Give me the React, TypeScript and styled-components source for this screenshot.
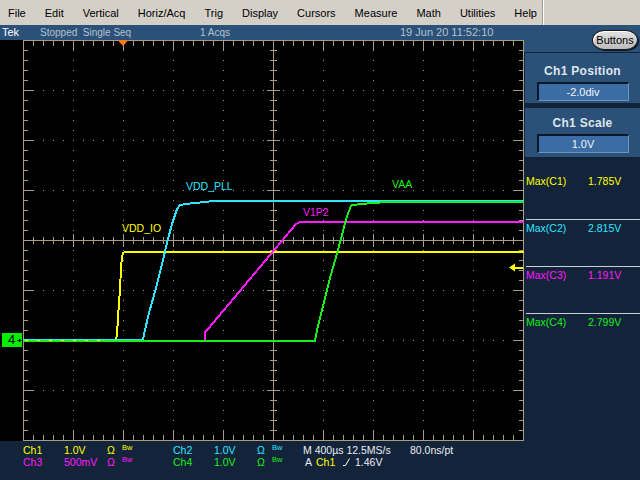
import React from 'react';
import styled, { createGlobalStyle } from 'styled-components';

const GlobalStyle = createGlobalStyle`
  html, body { margin: 0; padding: 0; background: #000; }
  body { width: 640px; height: 480px; overflow: hidden; }
`;

const TEK = `"Liberation Sans", Arial, sans-serif`;
const UI = `"Liberation Sans", Arial, sans-serif`;

const COL = {
  yellow: '#ffff00',
  cyan: '#2ee6ff',
  magenta: '#ff1aff',
  green: '#18f018',
  white: '#e8eef4',
  grid: '#a89e84',
};

const Frame = styled.div`
  width: 640px;
  height: 480px;
  display: grid;
  grid-template-rows: 25px 416px 39px;
  background: #13233a;
  overflow: hidden;
`;

/* ---------- menu ---------- */
const MenuBar = styled.div`
  display: flex;
  background: #d4d0c8;
  font-family: ${UI};
  font-size: 11px;
  color: #000;
`;
const MenuItems = styled.nav`
  width: 543px;
  box-sizing: border-box;
  display: flex;
  align-items: center;
  gap: 19px;
  padding-left: 8px;
  border-right: 1px solid #a09c94;
`;
const MenuFill = styled.div`
  flex: 1;
  border-left: 1px solid #ffffff;
`;
const MenuItem = styled.span`
  line-height: 24px;
`;

/* ---------- body ---------- */
const Body = styled.div`
  display: flex;
`;
const ScopeCol = styled.div`
  width: 524px;
  display: flex;
  flex-direction: column;
`;
const StatusBar = styled.div`
  height: 15px;
  background: #2b5179;
  display: grid;
  grid-template-columns: 38px 160px 200px auto;
  align-items: center;
  padding-left: 2px;
  font-family: ${TEK};
  font-size: 10px;
  line-height: 15px;
  color: #b6c2cf;
  white-space: pre;
`;
const StatusDate = styled.span`
  font-size: 11px;
`;
const TekLogo = styled.span`
  color: #ffffff;
  font-family: ${UI};
  font-size: 11px;
`;
const Screen = styled.div`
  position: relative;
  height: 401px;
  background: #000;
`;
const ChannelMarker = styled.div<{ $c: string }>`
  position: absolute;
  left: 2px;
  top: 293px;
  width: 20px;
  height: 14px;
  background: ${(p) => p.$c};
  display: flex;
  align-items: center;
  padding-left: 6px;
  box-sizing: border-box;
  gap: 2px;
  font-family: ${UI};
  font-size: 13px;
  line-height: 14px;
  color: #000;
`;

const SideCol = styled.div`
  width: 116px;
  display: flex;
  flex-direction: column;
  background: #13233a;
`;
const SideStatus = styled.div`
  height: 27px;
  background: #2b5179;
  display: flex;
  justify-content: flex-end;
  align-items: flex-start;
  padding: 5px 2px 0 0;
  box-sizing: border-box;
`;
const PillButton = styled.div`
  width: 46px;
  height: 20px;
  box-sizing: border-box;
  border-radius: 12px / 10px;
  background: linear-gradient(#e2e2e2, #bcbcbc);
  border: 1px solid #1a1a1a;
  box-shadow: inset 1px 1px 0 #ffffff, 1px 1px 0 #0c1828;
  display: flex;
  align-items: center;
  justify-content: center;
  font-family: ${UI};
  font-size: 11px;
  color: #000;
`;
const ControlGroup = styled.div<{ $top: number; $pad: number; $h: number }>`
  margin: ${(p) => p.$top}px 0 0 1px;
  height: ${(p) => p.$h}px;
  background: #2b5179;
  display: flex;
  flex-direction: column;
  align-items: center;
  padding-top: ${(p) => p.$pad}px;
  box-sizing: border-box;
`;
const ControlTitle = styled.div`
  font-family: ${UI};
  font-weight: bold;
  font-size: 12px;
  line-height: 14px;
  color: #dfe5ec;
  letter-spacing: 0.3px;
`;
const ControlValue = styled.div`
  margin-top: 4px;
  width: 92px;
  height: 19px;
  box-sizing: border-box;
  background: #3b6da4;
  border-top: 2px solid #0b182a;
  border-left: 2px solid #0b182a;
  border-bottom: 1px solid #6f95bd;
  border-right: 1px solid #6f95bd;
  display: flex;
  align-items: center;
  justify-content: center;
  font-family: ${TEK};
  font-size: 11px;
  color: #f0f4f8;
`;
const MeasPanel = styled.div`
  flex: 1;
  padding-top: 15px;
  margin-left: 2px;
`;
const MeasRow = styled.div<{ $line: boolean }>`
  height: 47px;
  box-sizing: border-box;
  border-top: 1px solid ${(p) => (p.$line ? '#c8d0da' : 'transparent')};
  padding-top: 2px;
  display: grid;
  grid-template-columns: 62px auto;
  align-items: start;
  font-family: ${TEK};
  font-size: 10.5px;
  line-height: 13px;
`;
const Colored = styled.span<{ $c: string }>`
  color: ${(p) => p.$c};
`;

/* ---------- bottom readout ---------- */
const Readout = styled.div`
  display: grid;
  grid-template-columns: 41px 43px 15px 51px 41px 43px 15px 31px auto;
  grid-auto-rows: 12px;
  padding: 3px 0 0 23px;
  font-family: ${TEK};
  font-size: 10.5px;
  line-height: 12px;
  white-space: pre;
`;
const Bw = styled.span<{ $c: string }>`
  color: ${(p) => p.$c};
  font-family: ${UI};
  font-size: 7.5px;
  line-height: 8px;
  align-self: start;
`;
const TimeInfo = styled.span`
  display: grid;
  grid-template-columns: 107px auto;
  color: ${COL.white};
`;
const TrigInfo = styled.span`
  display: grid;
  grid-template-columns: 11px 27px 12px auto;
  align-items: center;
  padding-left: 2px;
  color: ${COL.white};
`;

const TraceLabel = styled.text<{ $c: string }>`
  fill: ${(p) => p.$c};
  font-family: ${TEK};
  font-size: 10.5px;
`;

/* ---------- graticule ---------- */
const L = 23, T = 40, R = 523, B = 440, CX = 273, CY = 240;

function buildTicks(): string {
  let d = '';
  d += `M${L + 0.5} ${T}V${B + 1}M${R + 0.5} ${T}V${B + 1}M${L} ${T + 0.5}H${R + 1}M${L} ${B + 0.5}H${R + 1}`;
  d += `M${CX + 0.5} ${T}V${B + 1}M${L} ${CY + 0.5}H${R + 1}`;
  for (let y = T + 10; y < B; y += 10) {
    const major = (y - T) % 50 === 0;
    const len = major ? 10 : 4;
    d += `M${L} ${y + 0.5}h${len + 1}`;
    d += `M${R + 1} ${y + 0.5}h${-(len + 1)}`;
    const h = major ? 6 : 3;
    d += `M${CX - h} ${y + 0.5}h${2 * h + 1}`;
  }
  for (let x = L + 10; x < R; x += 10) {
    const major = (x - L) % 50 === 0;
    const len = major ? 9 : 5;
    d += `M${x + 0.5} ${T}v${len + 1}`;
    d += `M${x + 0.5} ${B + 1}v${-(len + 1)}`;
    const h = major ? 6 : 3;
    d += `M${x + 0.5} ${CY - h}v${2 * h + 1}`;
  }
  return d;
}

function buildDots(): string {
  let d = '';
  for (let gx = L + 50; gx < R; gx += 50) {
    if (gx === CX) continue;
    for (let y = T + 10; y < B; y += 10) d += `M${gx} ${y}h1v1h-1z`;
  }
  for (let gy = T + 50; gy < B; gy += 50) {
    if (gy === CY) continue;
    for (let x = L + 10; x < R; x += 10) d += `M${x} ${gy}h1v1h-1z`;
  }
  return d;
}

const TICKS = buildTicks();
const DOTS = buildDots();

const TRACES = {
  yellow: '23,341 116,341 117,334 118,318 119,302 120,290 121,268 122,257 123,253 125,252 524,252',
  magenta: '205,341 205,332 208,329 296,224 300,222 524,222',
  cyan: '23,340 143,340 144,334 149,313 156,288 162,264 167,243 172,224 177,209 180,205 190,203.5 200,202.5 213,201 524,201',
  green: '23,341 315,341 317,330 330,278 338,250 347,216 351,206 352,205 367,203.5 380,202.5 420,202 524,202',
};

function ScopeDisplay() {
  return (
    <svg width={524} height={401} viewBox="0 40 524 401" style={{ display: 'block' }}>
      <path d={DOTS} fill={COL.grid} shapeRendering="crispEdges" />
      <path d={TICKS} stroke={COL.grid} strokeWidth={1} fill="none" shapeRendering="crispEdges" />
      <polygon points="117.5,40 128.5,40 123,46" fill="#ff7a1e" />
      <polyline points={TRACES.yellow} fill="none" stroke={COL.yellow} strokeWidth={2} shapeRendering="crispEdges" />
      <polyline points={TRACES.magenta} fill="none" stroke={COL.magenta} strokeWidth={2} shapeRendering="crispEdges" />
      <polyline points={TRACES.cyan} fill="none" stroke={COL.cyan} strokeWidth={2} shapeRendering="crispEdges" />
      <polyline points={TRACES.green} fill="none" stroke={COL.green} strokeWidth={2} shapeRendering="crispEdges" />
      <line x1={25} y1={340.5} x2={105} y2={340.5} stroke={COL.yellow} strokeWidth={1} strokeDasharray="3 9" shapeRendering="crispEdges" />
      <polygon points="509,267.5 515,263.5 515,271.5" fill={COL.yellow} />
      <line x1={514} y1={267.5} x2={523} y2={267.5} stroke={COL.yellow} strokeWidth={2} shapeRendering="crispEdges" />
      <TraceLabel $c={COL.yellow} x={122} y={232}>VDD_IO</TraceLabel>
      <TraceLabel $c={COL.cyan} x={186} y={190}>VDD_PLL</TraceLabel>
      <TraceLabel $c={COL.magenta} x={303} y={216}>V1P2</TraceLabel>
      <TraceLabel $c={COL.green} x={392} y={188}>VAA</TraceLabel>
    </svg>
  );
}

const MENU = ['File', 'Edit', 'Vertical', 'Horiz/Acq', 'Trig', 'Display', 'Cursors', 'Measure', 'Math', 'Utilities', 'Help'];

const MEAS = [
  { label: 'Max(C1)', value: '1.785V', c: COL.yellow },
  { label: 'Max(C2)', value: '2.815V', c: COL.cyan },
  { label: 'Max(C3)', value: '1.191V', c: COL.magenta },
  { label: 'Max(C4)', value: '2.799V', c: COL.green },
];

function ChannelReadout({ ch, scale, c }: { ch: string; scale: string; c: string }) {
  return (
    <>
      <Colored $c={c}>{ch}</Colored>
      <Colored $c={c}>{scale}</Colored>
      <Colored $c={c}>Ω</Colored>
      <Bw $c={c}>Bw</Bw>
    </>
  );
}

export default function App() {
  return (
    <>
      <GlobalStyle />
      <Frame>
        <MenuBar>
          <MenuItems>
            {MENU.map((m) => (
              <MenuItem key={m}>{m}</MenuItem>
            ))}
          </MenuItems>
          <MenuFill />
        </MenuBar>
        <Body>
          <ScopeCol>
            <StatusBar>
              <TekLogo>Tek</TekLogo>
              <span>Stopped  Single Seq</span>
              <span>1 Acqs</span>
              <StatusDate>19 Jun 20 11:52:10</StatusDate>
            </StatusBar>
            <Screen>
              <ScopeDisplay />
              <ChannelMarker $c="#00f000">
                <span>4</span>
                <svg width={7} height={7} viewBox="0 0 7 7">
                  <path d="M0 3.5H4" stroke="#000" strokeWidth={1.2} />
                  <path d="M3 0.5L7 3.5L3 6.5Z" fill="#000" />
                </svg>
              </ChannelMarker>
            </Screen>
          </ScopeCol>
          <SideCol>
            <SideStatus>
              <PillButton>Buttons</PillButton>
            </SideStatus>
            <ControlGroup $top={1} $pad={11} $h={50}>
              <ControlTitle>Ch1 Position</ControlTitle>
              <ControlValue>-2.0div</ControlValue>
            </ControlGroup>
            <ControlGroup $top={5} $pad={8} $h={49}>
              <ControlTitle>Ch1 Scale</ControlTitle>
              <ControlValue>1.0V</ControlValue>
            </ControlGroup>
            <MeasPanel>
              {MEAS.map((m, i) => (
                <MeasRow key={m.label} $line={i > 0}>
                  <Colored $c={m.c}>{m.label}</Colored>
                  <Colored $c={m.c}>{m.value}</Colored>
                </MeasRow>
              ))}
            </MeasPanel>
          </SideCol>
        </Body>
        <Readout>
          <ChannelReadout ch="Ch1" scale="1.0V" c={COL.yellow} />
          <ChannelReadout ch="Ch2" scale="1.0V" c={COL.cyan} />
          <TimeInfo>
            <span>M 400µs 12.5MS/s</span>
            <span>80.0ns/pt</span>
          </TimeInfo>
          <ChannelReadout ch="Ch3" scale="500mV" c={COL.magenta} />
          <ChannelReadout ch="Ch4" scale="1.0V" c={COL.green} />
          <TrigInfo>
            <span>A</span>
            <Colored $c={COL.yellow}>Ch1</Colored>
            <svg width={8} height={8} viewBox="0 0 8 8">
              <path d="M0 7.5H2.5L6.5 0.5" stroke="#fff" strokeWidth={1} fill="none" />
            </svg>
            <span>1.46V</span>
          </TrigInfo>
        </Readout>
      </Frame>
    </>
  );
}
